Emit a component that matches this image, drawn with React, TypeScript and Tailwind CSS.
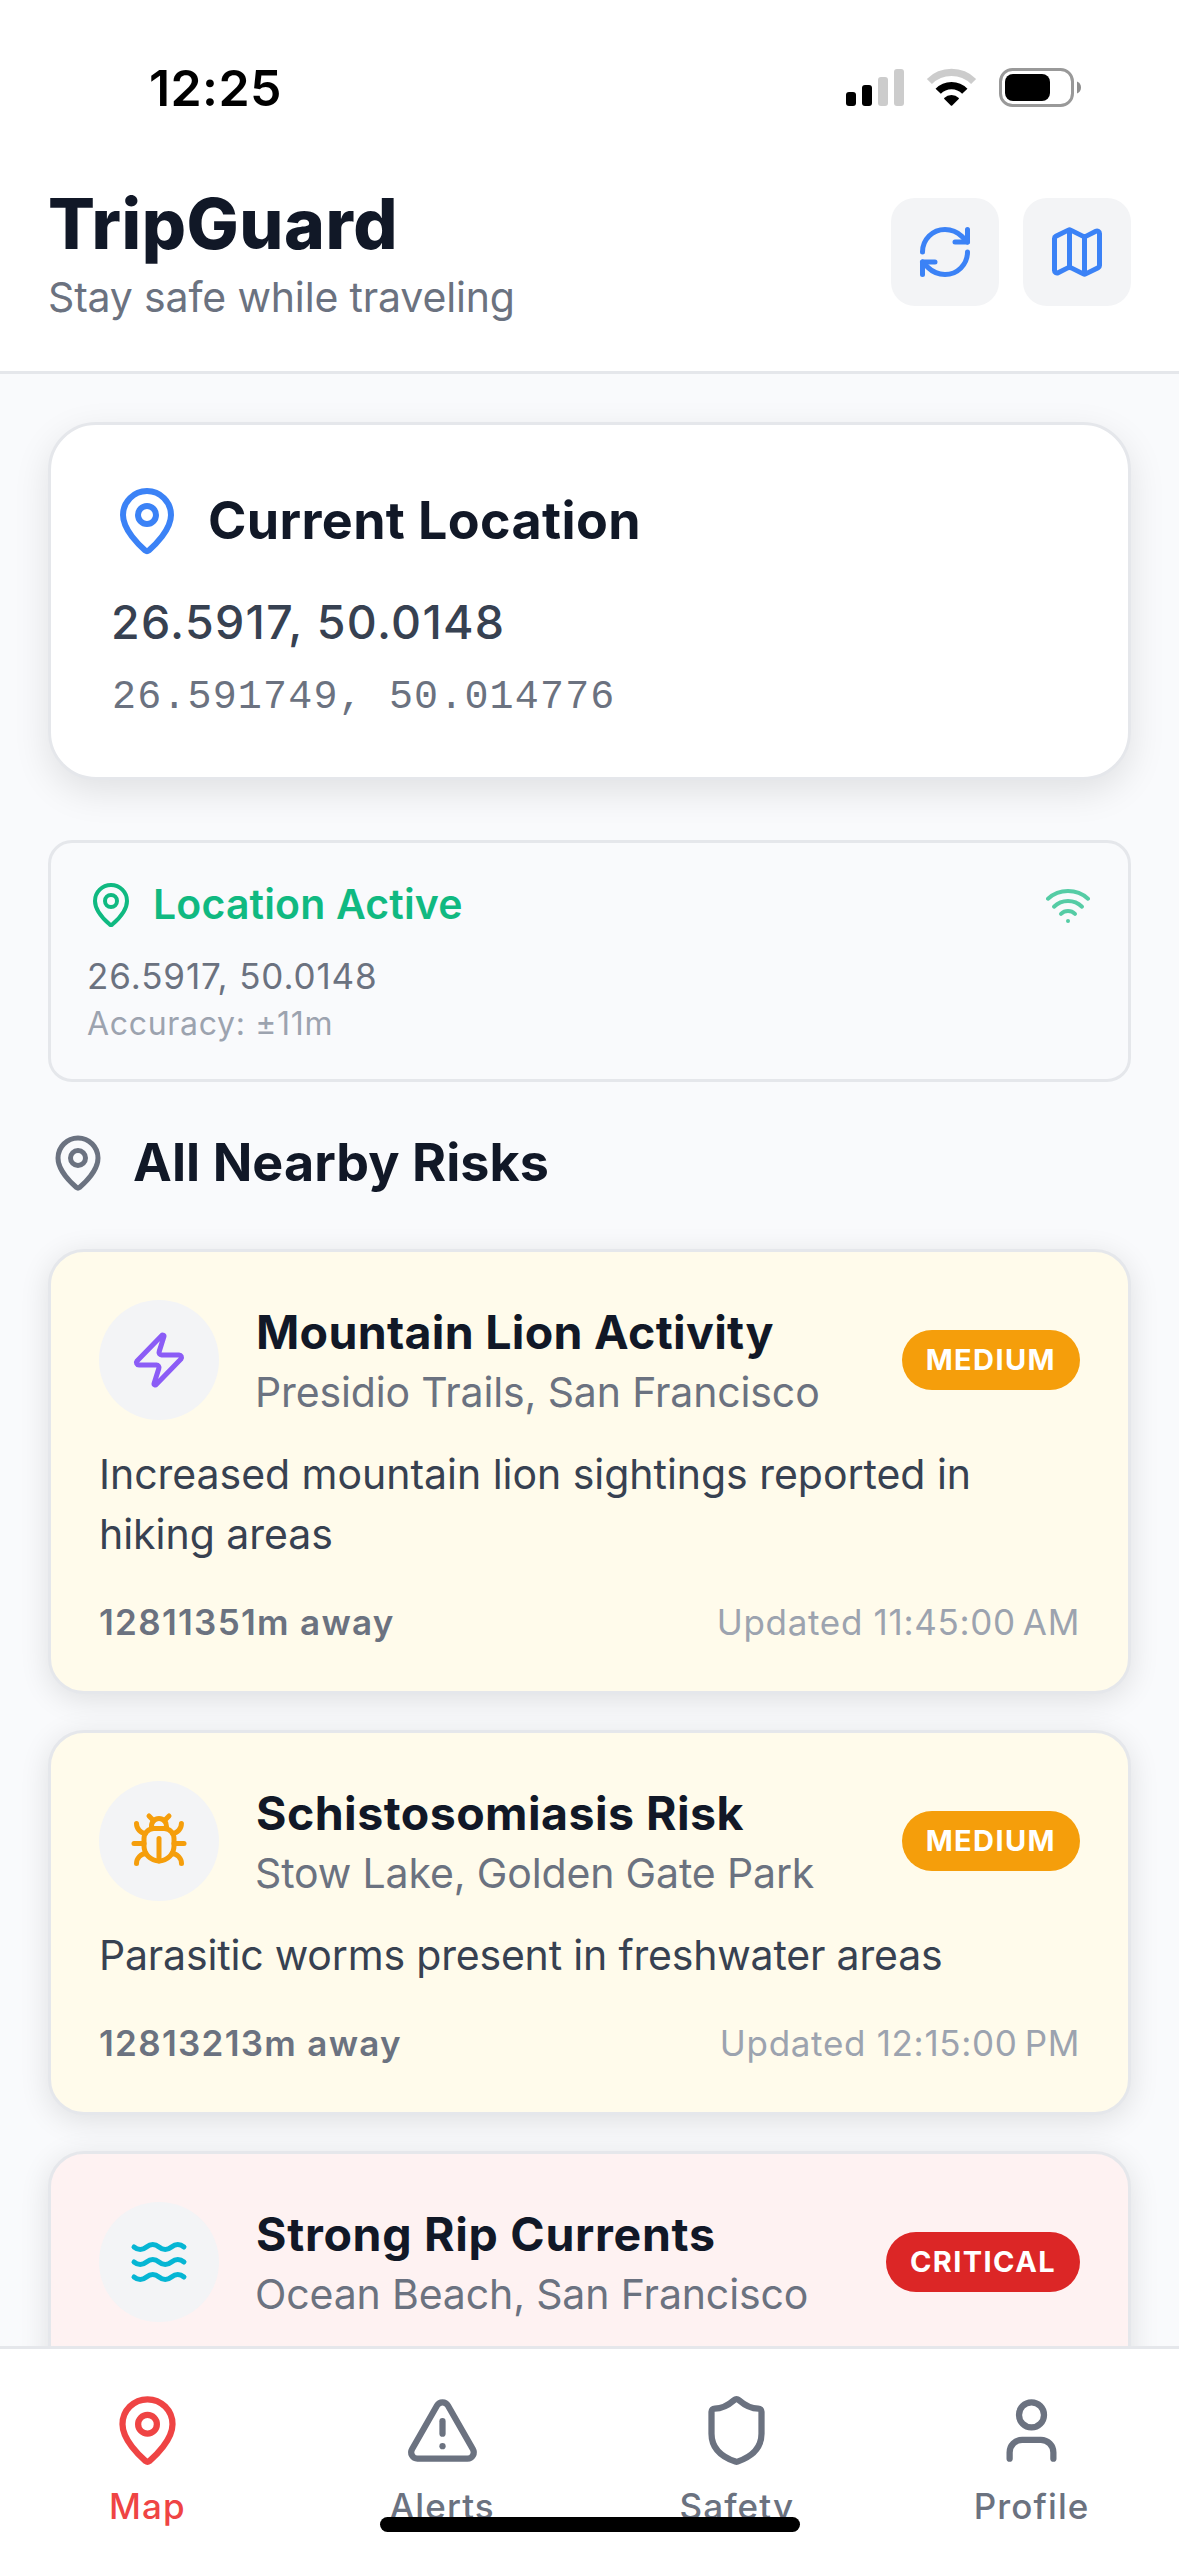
import React from "react";
import {
  Map as MapIcon,
  MapPin,
  RefreshCw,
  Shield,
  TriangleAlert,
  User,
  Waves,
  Wifi,
  Zap,
} from "lucide-react";

function BugIcon({ className }: { className?: string }) {
  return (
    <svg
      viewBox="0 0 24 24"
      fill="none"
      stroke="currentColor"
      strokeWidth={2}
      strokeLinecap="round"
      strokeLinejoin="round"
      className={className}
    >
      <path d="m8 2 1.88 1.88" />
      <path d="M14.12 3.88 16 2" />
      <path d="M9 7.13v-1a3.003 3.003 0 1 1 6 0v1" />
      <path d="M12 20c-3.3 0-6-2.7-6-6v-3a4 4 0 0 1 4-4h4a4 4 0 0 1 4 4v3c0 3.3-2.7 6-6 6" />
      <path d="M12 20v-9" />
      <path d="M6.53 9C4.6 8.8 3 7.1 3 5" />
      <path d="M6 13H2" />
      <path d="M3 21c0-2.1 1.7-3.9 3.8-4" />
      <path d="M20.97 5c0 2.1-1.6 3.8-3.5 4" />
      <path d="M22 13h-4" />
      <path d="M17.2 17c2.1.1 3.8 1.9 3.8 4" />
    </svg>
  );
}

function StatusBar() {
  return (
    <div className="flex h-[177px] shrink-0 items-start justify-between pt-[58px] pr-[98px] pl-[149px]">
      <span className="text-[50px] leading-[60px] font-semibold tracking-[0.4px] text-black">
        12:25
      </span>
      <div className="flex items-start pt-[10px]">
        <svg width="58" height="39" viewBox="0 0 58 39" className="mr-[22px]">
          <rect x="0" y="24" width="10" height="14" rx="3" fill="#000" />
          <rect x="16" y="17" width="10" height="21" rx="3" fill="#000" />
          <rect x="32" y="9" width="10" height="29" rx="3" fill="#ccc" />
          <rect x="48" y="1" width="10" height="37" rx="3" fill="#ccc" />
        </svg>
        <svg width="51" height="39" viewBox="-25.5 -36 51 39" className="mr-[22px]" fill="none">
          <path d="M-22.1 -22.5A31.5 31.5 0 0 1 22.1 -22.5" stroke="#ccc" strokeWidth="7.2" />
          <path d="M-13.3 -12.7A18.5 18.5 0 0 1 13.3 -12.7" stroke="#000" strokeWidth="7.4" />
          <path
            d="M-7.3 -5.9A10.4 10.4 0 0 1 7.3 -5.9Q7.6 -5.5 7.2 -5L0.7 1.5Q0 2.1 -0.7 1.5L-7.2 -5Q-7.6 -5.5 -7.3 -5.9Z"
            fill="#000"
          />
        </svg>
        <svg width="82" height="39" viewBox="0 0 82 39">
          <rect x="1.5" y="1.5" width="72" height="36" rx="12" fill="none" stroke="#999" strokeWidth="3" />
          <rect x="6" y="6" width="45" height="27" rx="8" fill="#000" />
          <path d="M78 13.5C80.6 14.5 82 16.8 82 19.5C82 22.2 80.6 24.5 78 25.5Z" fill="#8e8e8e" />
        </svg>
      </div>
    </div>
  );
}

function Header() {
  return (
    <header className="shrink-0 border-b-[3px] border-[#e5e7eb] bg-white">
      <StatusBar />
      <div className="flex items-center justify-between px-12 pt-[5px] pb-[49px]">
        <div>
          <h1 className="text-[69.5px] leading-[84px] font-extrabold tracking-[0.5px] text-[#111827]">
            TripGuard
          </h1>
          <p className="mt-[6px] text-[41px] leading-[50px] tracking-[-0.16px] text-[#6b7280]">
            Stay safe while traveling
          </p>
        </div>
        <div className="flex gap-6 text-[#3b82f6]">
          <button className="flex size-[108px] items-center justify-center rounded-3xl bg-[#f3f4f6]">
            <RefreshCw className="size-[60px]" />
          </button>
          <button className="flex size-[108px] items-center justify-center rounded-3xl bg-[#f3f4f6]">
            <MapIcon className="size-[60px]" />
          </button>
        </div>
      </div>
    </header>
  );
}

function CurrentLocation() {
  return (
    <section className="h-[358px] rounded-[48px] border-[3px] border-[#e5e7eb] bg-white p-[60px] shadow-[0_12px_36px_rgba(0,0,0,0.1)]">
      <div className="flex items-center gap-[25px]">
        <MapPin className="size-[72px] text-[#3b82f6]" />
        <h2 className="text-[52px] leading-[72px] font-bold tracking-[0.37px] text-[#111827]">
          Current Location
        </h2>
      </div>
      <p className="mt-[37px] text-[46.5px] leading-[57px] font-medium tracking-[1.3px] text-[#374151]">
        26.5917, 50.0148
      </p>
      <p className="mt-[25px] pl-px font-['Liberation_Mono',monospace] text-[40px] leading-[43px] tracking-[1.17px] text-[#6b7280]">
        26.591749, 50.014776
      </p>
    </section>
  );
}

function LocationStatus() {
  return (
    <section className="mt-[60px] h-[242px] rounded-3xl border-[3px] border-[#e5e7eb] bg-[#f9fafc] p-9">
      <div className="flex items-center justify-between">
        <div className="flex items-center gap-[18px] text-[#10b981]">
          <MapPin className="size-12" />
          <span className="text-[41px] leading-[51px] font-semibold tracking-[0.15px]">
            Location Active
          </span>
        </div>
        <Wifi className="size-12 text-[#10b981] opacity-70" />
      </div>
      <p className="mt-[25px] text-[35px] leading-[43px] tracking-[0.9px] text-[#6b7280]">
        26.5917, 50.0148
      </p>
      <p className="mt-[6px] text-[32px] leading-[40px] tracking-[0.68px] text-[#9ca3af]">
        Accuracy: ±11m
      </p>
    </section>
  );
}

type Risk = {
  title: string;
  titleTracking: string;
  place: string;
  description?: string;
  descriptionTracking?: string;
  distance?: string;
  updated?: string;
  level: string;
  badge: string;
  card: string;
  Icon: React.ComponentType<{ className?: string }>;
  iconColor: string;
};

const risks: Risk[] = [
  {
    title: "Mountain Lion Activity",
    titleTracking: "tracking-[0.3px]",
    place: "Presidio Trails, San Francisco",
    description: "Increased mountain lion sightings reported in hiking areas",
    descriptionTracking: "tracking-[-0.03px]",
    distance: "12811351m away",
    updated: "Updated 11:45:00\u202fAM",
    level: "MEDIUM",
    badge: "bg-[#f59e0b]",
    card: "bg-[#fffbeb]",
    Icon: Zap,
    iconColor: "text-[#8b5cf6]",
  },
  {
    title: "Schistosomiasis Risk",
    titleTracking: "tracking-[0.45px]",
    place: "Stow Lake, Golden Gate Park",
    description: "Parasitic worms present in freshwater areas",
    descriptionTracking: "tracking-[-0.18px]",
    distance: "12813213m away",
    updated: "Updated 12:15:00\u202fPM",
    level: "MEDIUM",
    badge: "bg-[#f59e0b]",
    card: "bg-[#fffbeb]",
    Icon: BugIcon,
    iconColor: "text-[#f59e0b]",
  },
  {
    title: "Strong Rip Currents",
    titleTracking: "tracking-[0.7px]",
    place: "Ocean Beach, San Francisco",
    level: "CRITICAL",
    badge: "bg-[#dc2626]",
    card: "bg-[#fef2f2]",
    Icon: Waves,
    iconColor: "text-[#06b6d4]",
  },
];

function RiskCard({ risk }: { risk: Risk }) {
  const { Icon } = risk;
  return (
    <article
      className={`min-h-[385px] rounded-[36px] border-[3px] border-[#e5e7eb] p-12 shadow-[0_6px_30px_rgba(0,0,0,0.11)] ${risk.card}`}
    >
      <div className="flex h-[120px] items-center">
        <div
          className={`flex size-[120px] shrink-0 items-center justify-center rounded-full bg-[#f3f4f6] ${risk.iconColor}`}
        >
          <Icon className="size-[60px]" />
        </div>
        <div className="ml-9 grow pt-[2px]">
          <h3
            className={`pl-px text-[46.5px] leading-[62px] font-bold text-[#111827] ${risk.titleTracking}`}
          >
            {risk.title}
          </h3>
          <p className="text-[41px] leading-[58px] tracking-[-0.14px] text-[#6b7280]">
            {risk.place}
          </p>
        </div>
        <span
          className={`rounded-full px-6 text-[29px] leading-[60px] font-bold tracking-[1.4px] text-white ${risk.badge}`}
        >
          {risk.level}
        </span>
      </div>
      {risk.description && (
        <p className={`mt-6 text-[41px] leading-[60px] text-[#374151] ${risk.descriptionTracking}`}>
          {risk.description}
        </p>
      )}
      {risk.distance && (
        <div className="mt-[37px] flex items-center justify-between text-[35px] leading-[42px]">
          <span className="font-semibold tracking-[1.3px] text-[#6b7280]">{risk.distance}</span>
          <span className="tracking-[0.69px] text-[#9ca3af]">{risk.updated}</span>
        </div>
      )}
    </article>
  );
}

const tabs = [
  { label: "Map", Icon: MapPin, color: "text-[#ef4444]" },
  { label: "Alerts", Icon: TriangleAlert, color: "text-[#6b7280]" },
  { label: "Safety", Icon: Shield, color: "text-[#6b7280]" },
  { label: "Profile", Icon: User, color: "text-[#6b7280]" },
];

function TabBar() {
  return (
    <nav className="relative grid h-[210px] shrink-0 grid-cols-4 border-t-[3px] border-[#e5e7eb] bg-white">
      {tabs.map(({ label, Icon, color }) => (
        <div key={label} className={`flex flex-col items-center pt-11 ${color}`}>
          <Icon className="size-[75px]" />
          <span className="mt-[17px] text-[35px] leading-[43px] font-medium tracking-[1.1px]">
            {label}
          </span>
        </div>
      ))}
      <div className="absolute bottom-6 left-[380px] h-[15px] w-[420px] rounded-full bg-black" />
    </nav>
  );
}

export default function App() {
  return (
    <div className="flex h-[2556px] w-[1179px] flex-col overflow-hidden bg-[#f9fafc] font-['Inter',sans-serif]">
      <Header />
      <main className="min-h-0 grow overflow-hidden px-12 pt-12">
        <CurrentLocation />
        <LocationStatus />
        <div className="mt-12 flex h-[65px] items-center gap-[25px]">
          <MapPin className="size-[60px] text-[#6b7280]" />
          <h2 className="text-[52px] leading-[64px] font-bold tracking-[0.08px] text-[#111827]">
            All Nearby Risks
          </h2>
        </div>
        <div className="mt-[54px] flex flex-col gap-9">
          {risks.map((risk) => (
            <RiskCard key={risk.title} risk={risk} />
          ))}
        </div>
      </main>
      <TabBar />
    </div>
  );
}
